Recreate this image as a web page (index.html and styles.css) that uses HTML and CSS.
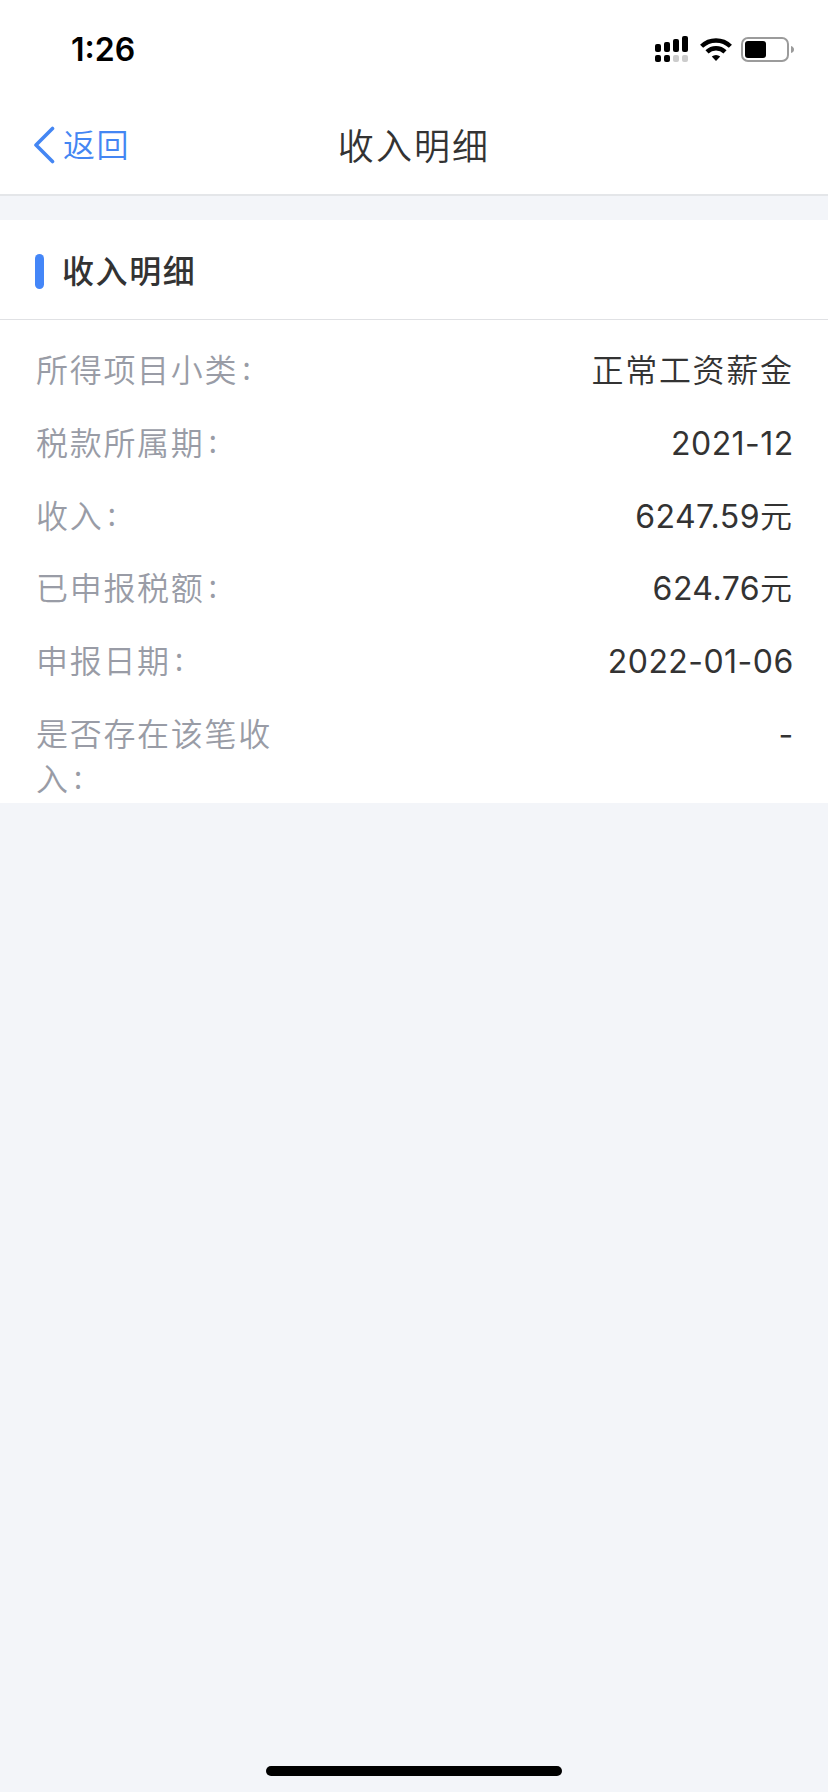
FILE: index.html
```html
<!DOCTYPE html>
<html lang="zh-CN">
<head>
    <meta charset="UTF-8">
    <meta name="viewport" content="width=device-width, initial-scale=1.0">
    <title>收入明细</title>
    <link rel="stylesheet" href="styles.css">
</head>
<body>

    <div class="status-bar">
        <span class="time">1:26</span>
        <div class="status-icons">
            <svg class="signal" width="34" height="27" viewBox="0 0 34 27">
                <rect x="0" y="8" width="6" height="8" rx="2"/>
                <rect x="9" y="6" width="6" height="10" rx="2"/>
                <rect x="18" y="3" width="6" height="13" rx="2"/>
                <rect x="27" y="0" width="6" height="16" rx="2"/>
                <rect x="0" y="19" width="6" height="7" rx="2"/>
                <rect x="9" y="19" width="6" height="7" rx="2"/>
                <rect class="dim" x="18" y="19" width="6" height="7" rx="2"/>
                <rect class="dim" x="27" y="19" width="6" height="7" rx="2"/>
            </svg>
            <svg class="wifi" width="32" height="24" viewBox="0 0 32 24">
                <path class="wave" d="M1.6 8.3 A20.6 20.6 0 0 1 30.4 8.3"/>
                <path class="wave" d="M7 13.9 A12.8 12.8 0 0 1 25 13.9"/>
                <path d="M11.8 18.6 A6.2 6.2 0 0 1 20.2 18.6 L16 23 Z"/>
            </svg>
            <svg class="battery" width="53" height="25" viewBox="0 0 53 25">
                <rect class="shell" x="1" y="1" width="46" height="23" rx="6"/>
                <rect x="4" y="4" width="21" height="17" rx="3"/>
                <path class="cap" d="M50 9 Q53 10 53 12.5 Q53 15 50 16 Z"/>
            </svg>
        </div>
    </div>

    <div class="nav-bar">
        <a class="back">
            <svg width="22" height="38" viewBox="0 0 22 38">
                <path d="M19.5 2.5 L3 19 L19.5 35.5"/>
            </svg>
            <span>返回</span>
        </a>
        <div class="nav-title">收入明细</div>
    </div>

    <div class="card">
        <div class="card-title"><span>收入明细</span></div>
        <div class="row">
            <span class="label">所得项目小类<span class="colon">:</span></span>
            <span class="value">正常工资薪金</span>
        </div>
        <div class="row">
            <span class="label">税款所属期<span class="colon">:</span></span>
            <span class="value"><span class="num">2021-12</span></span>
        </div>
        <div class="row">
            <span class="label">收入<span class="colon">:</span></span>
            <span class="value"><span class="num">6247.59</span>元</span>
        </div>
        <div class="row">
            <span class="label">已申报税额<span class="colon">:</span></span>
            <span class="value"><span class="num">624.76</span>元</span>
        </div>
        <div class="row">
            <span class="label">申报日期<span class="colon">:</span></span>
            <span class="value"><span class="num">2022-01-06</span></span>
        </div>
        <div class="row">
            <span class="label">是否存在该笔收入<span class="colon">:</span></span>
            <span class="value"><span class="num">-</span></span>
        </div>
    </div>

    <div class="home-indicator"></div>

</body>
</html>
```

FILE: styles.css
```css
* {
    box-sizing: border-box;
}
body {
    display: flex;
    flex-direction: column;
    height: 1792px;
    margin: 0;
    background-color: #f3f5f9;
    color: #333;
    font-family: "Noto Sans CJK SC", sans-serif;
    font-size: 32px;
    font-weight: 350;
}
.status-bar {
    display: flex;
    justify-content: space-between;
    align-items: center;
    height: 98px;
    padding: 1px 34px 0 71px;
    background-color: #fff;
    color: #000;
}
.time {
    font-family: Inter, sans-serif;
    font-size: 32px;
    font-weight: 600;
}
.status-icons {
    display: flex;
    align-items: center;
}
.wifi {
    margin: 0 9px 0 11px;
}
.wave {
    fill: none;
    stroke: #000;
    stroke-width: 4.4;
}
.dim {
    fill: #ccc;
}
.shell {
    fill: none;
    stroke: #9b9b9b;
    stroke-width: 2;
}
.cap {
    fill: #9b9b9b;
}
.nav-bar {
    display: grid;
    grid-template-columns: 1fr auto 1fr;
    align-items: center;
    height: 98px;
    padding: 0 33px;
    background-color: #fff;
    border-bottom: 2px solid #e4e6e9;
}
.back {
    display: flex;
    align-items: center;
    gap: 8px;
    padding-bottom: 2px;
    color: #4486f3;
    letter-spacing: 1.6px;
}
.back span {
    padding-bottom: 4px;
}
.back path {
    fill: none;
    stroke: #4486f3;
    stroke-width: 3.6;
    stroke-linecap: round;
    stroke-linejoin: round;
}
.nav-title {
    padding-bottom: 5px;
    font-size: 36px;
    letter-spacing: 2.1px;
}
.card {
    margin-top: 24px;
    padding-bottom: 2px;
    background-color: #fff;
}
.card-title {
    display: flex;
    align-items: center;
    height: 100px;
    padding-left: 35px;
    border-bottom: 1px solid #e0e1e4;
    font-weight: 500;
    letter-spacing: 1.6px;
}
.card-title span {
    padding-bottom: 2px;
}
.card-title::before {
    content: "";
    width: 9px;
    height: 35px;
    margin: 4px 18px 0 0;
    border-radius: 5px;
    background-color: #4486f8;
}
.row {
    display: flex;
    justify-content: space-between;
    padding: 27.3px 36px 0;
    line-height: 45.5px;
}
.card-title + .row {
    padding-top: 26px;
}
.label {
    width: 242px;
    color: #999ca6;
    letter-spacing: 1.7px;
}
.colon {
    margin-left: 4px;
    line-height: 1;
    vertical-align: 2px;
}
.value {
    letter-spacing: 1.7px;
    margin-right: -1.7px;
}
.num {
    font-family: Inter, sans-serif;
    font-weight: 400;
    line-height: 1;
    letter-spacing: 0.45px;
}
.home-indicator {
    width: 296px;
    height: 10px;
    margin: auto auto 16px;
    border-radius: 5px;
    background-color: #000;
}
```
